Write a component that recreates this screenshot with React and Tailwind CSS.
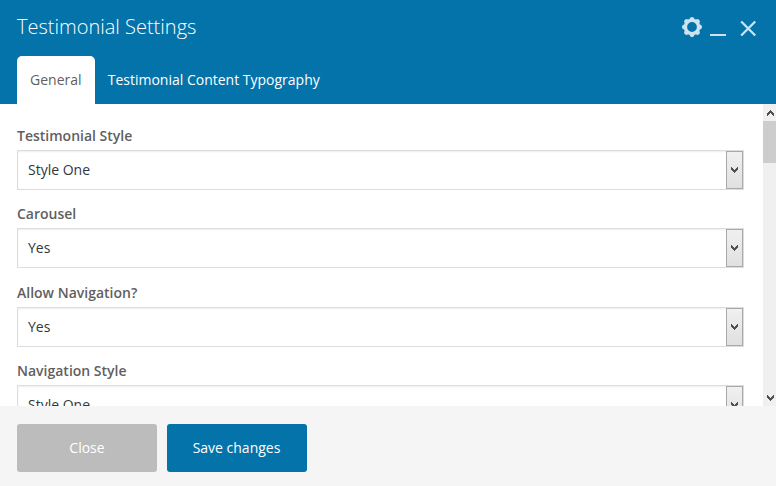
const FIELDS = [
  { label: "Testimonial Style", value: "Style One", space: "h-[78px]" },
  { label: "Carousel", value: "Yes", space: "h-[79px]" },
  { label: "Allow Navigation?", value: "Yes", space: "h-[78px]" },
  { label: "Navigation Style", value: "Style One", space: "h-[79px]" },
];

function Chevron({ up = false }) {
  return (
    <svg width="7" height="6" viewBox="0 0 7 6" shapeRendering="crispEdges" className={up ? "rotate-180" : ""}>
      <path d="M0 0h1v1h1v1h1v1h1v-1h1v-1h1v-1h1v3h-1v1h-1v1h-1v1h-1v-1h-1v-1h-1v-1h-1z" fill="#505050" />
    </svg>
  );
}

function Gear() {
  const teeth = [0, 45, 90, 135, 180, 225, 270, 315];
  return (
    <svg width="22" height="22" viewBox="-11 -11 22 22" className="text-[#cde3ee]">
      <circle r="6.6" fill="none" stroke="currentColor" strokeWidth="3.4" />
      {teeth.map((angle) => (
        <path key={angle} d="M-2.9 -7.2L-1.6 -9.6Q0 -10.6 1.6 -9.6L2.9 -7.2Z" fill="currentColor" transform={`rotate(${angle})`} />
      ))}
    </svg>
  );
}

function Field({ label, value, space }) {
  return (
    <div className={`${space} shrink-0`}>
      <div className="h-6 text-[14px] leading-5 font-semibold text-[#5f5f5f]">{label}</div>
      <div className="flex h-10 w-[727px] border border-[#dddddd] bg-white shadow-[inset_0_1px_2px_rgba(0,0,0,0.07)]">
        <div className="flex-1 pl-2.5 text-[14px] leading-[38px] text-[#32373c]">{value}</div>
        <div className="flex w-[17px] items-center justify-center border border-[#a9a9a9] bg-linear-to-b from-[#f0f0f0] to-[#e0e0e0]">
          <Chevron />
        </div>
      </div>
    </div>
  );
}

export default function App() {
  return (
    <div className="flex h-[486px] w-[776px] flex-col overflow-hidden bg-white font-['Open_Sans',sans-serif]">
      <header className="flex h-[104px] shrink-0 flex-col justify-between bg-[#0473aa] pl-[17px]">
        <div className="flex h-[54px] items-center justify-between pr-[19px]">
          <h1 className="text-[20px] leading-7 font-light text-white">Testimonial Settings</h1>
          <div className="flex items-center">
            <Gear />
            <svg width="17" height="22" viewBox="0 0 17 22" className="ml-[7px]">
              <path d="M0 18h16v2H0z" fill="#cde3ee" />
            </svg>
            <svg width="17" height="17" viewBox="0 0 17 17" className="ml-[13px] mt-0.5">
              <path d="M1.2 1.5l14 14M15.2 1.5l-14 14" stroke="#cde3ee" strokeWidth="2.3" />
            </svg>
          </div>
        </div>
        <nav className="flex h-12 text-[14px] leading-[48px]">
          <div className="w-[78px] rounded-t-[5px] bg-white pl-[13px] text-[#5f5f5f]">General</div>
          <div className="pl-[12.7px] text-white">Testimonial Content Typography</div>
        </nav>
      </header>
      <main className="flex h-[302px] shrink-0">
        <div className="flex flex-1 flex-col overflow-hidden pt-[22px] pl-[17px]">
          {FIELDS.map((field) => (
            <Field key={field.label} {...field} />
          ))}
        </div>
        <div className="flex w-[13px] flex-col items-center justify-between bg-[#f0f0f0]">
          <div className="flex w-full flex-col items-center">
            <div className="flex h-[17px] items-center pl-0.5"><Chevron up /></div>
            <div className="h-[42px] w-full bg-[#cdcdcd]" />
          </div>
          <div className="flex h-[17px] items-center pl-0.5"><Chevron /></div>
        </div>
      </main>
      <footer className="flex h-20 shrink-0 gap-2.5 bg-[#f5f5f5] pt-[18px] pl-[17px] text-[14px] text-white">
        <button className="h-12 w-[140px] rounded-[3px] bg-[#bcbcbc] pb-0.5">Close</button>
        <button className="h-12 w-[140px] rounded-[3px] bg-[#0473aa] pr-px pb-0.5">Save changes</button>
      </footer>
    </div>
  );
}
